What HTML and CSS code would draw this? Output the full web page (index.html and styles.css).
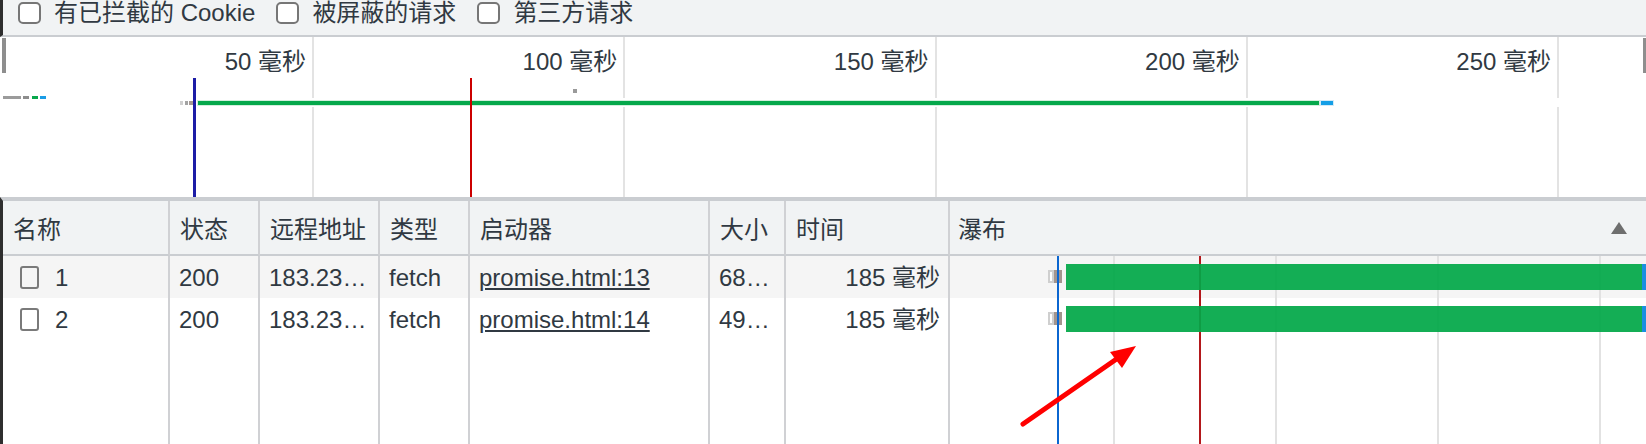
FILE: index.html
```html
<!DOCTYPE html>
<html lang="zh-CN">
<head>
<meta charset="utf-8">
<title>Network</title>
<link rel="stylesheet" href="styles.css">
</head>
<body>
<div class="app">
  <div class="toolbar">
    <label class="check"><span class="box"></span><span>有已拦截的 Cookie</span></label>
    <label class="check"><span class="box"></span><span>被屏蔽的请求</span></label>
    <label class="check"><span class="box"></span><span>第三方请求</span></label>
  </div>

  <div class="overview">
    <div class="tick">50 毫秒</div>
    <div class="tick">100 毫秒</div>
    <div class="tick">150 毫秒</div>
    <div class="tick">200 毫秒</div>
    <div class="tick">250 毫秒</div>

    <div class="ov-band"></div>
    <span class="handle handle-l"></span>
    <span class="handle handle-r"></span>
    <span class="ov-mark m1"></span>
    <span class="ov-mark m2"></span>
    <span class="ov-mark m3"></span>
    <span class="ov-mark m4"></span>
    <span class="ov-mark dot"></span>
    <span class="ov-mark p1"></span>
    <span class="ov-mark p2"></span>
    <span class="ov-mark p3"></span>
    <span class="ov-bar"></span>
    <span class="ov-recv"></span>
    <span class="ov-line ov-blue"></span>
    <span class="ov-line ov-red"></span>
  </div>

  <div class="table">
    <div class="c h">名称</div>
    <div class="c h">状态</div>
    <div class="c h">远程地址</div>
    <div class="c h">类型</div>
    <div class="c h">启动器</div>
    <div class="c h">大小</div>
    <div class="c h">时间</div>
    <div class="c h wfh last row1"><span>瀑布</span><span class="sort"></span></div>

    <div class="c r stripe name"><span class="doc"></span>1</div>
    <div class="c r stripe">200</div>
    <div class="c r stripe">183.23…</div>
    <div class="c r stripe">fetch</div>
    <div class="c r stripe"><span class="link">promise.html:13</span></div>
    <div class="c r stripe">68…</div>
    <div class="c r stripe num">185 毫秒</div>
    <div class="c r stripe last row2"></div>

    <div class="c r name"><span class="doc"></span>2</div>
    <div class="c r">200</div>
    <div class="c r">183.23…</div>
    <div class="c r">fetch</div>
    <div class="c r"><span class="link">promise.html:14</span></div>
    <div class="c r">49…</div>
    <div class="c r num">185 毫秒</div>
    <div class="c r last row3"></div>

    <div class="c f"></div>
    <div class="c f"></div>
    <div class="c f"></div>
    <div class="c f"></div>
    <div class="c f"></div>
    <div class="c f"></div>
    <div class="c f"></div>
    <div class="c f last row4"></div>

    <div class="wf">
      <span class="wf-grid g1"></span>
      <span class="wf-grid g2"></span>
      <span class="wf-grid g3"></span>
      <span class="wf-grid g4"></span>
      <span class="wf-line wf-red"></span>
      <span class="wf-queue q1"></span>
      <span class="wf-stall s1"></span>
      <span class="wf-queue q2"></span>
      <span class="wf-stall s2"></span>
      <span class="wf-line wf-blue"></span>
      <span class="wf-bar b1"></span>
      <span class="wf-recv b1"></span>
      <span class="wf-bar b2"></span>
      <span class="wf-recv b2"></span>
    </div>
  </div>

  <svg class="arrow" width="140" height="100" viewBox="0 0 140 100">
    <line x1="13" y1="89" x2="108" y2="23" stroke="#ff0000" stroke-width="5" stroke-linecap="round"/>
    <polygon points="126,11 100,17 112,33" fill="#ff0000"/>
  </svg>
</div>
</body>
</html>
```

FILE: styles.css
```css
* {
  box-sizing: border-box;
  margin: 0;
  padding: 0;
}

html,
body {
  width: 1646px;
  height: 444px;
  overflow: hidden;
  background: #ffffff;
}

body {
  font-family: "Liberation Sans", "Noto Sans CJK SC", sans-serif;
  font-size: 24px;
  color: #303942;
}

.app {
  position: relative;
  display: flex;
  flex-direction: column;
  height: 444px;
}

/* toolbar */
.toolbar {
  flex: none;
  height: 37px;
  display: flex;
  align-items: flex-start;
  gap: 21px;
  padding-left: 15px;
  background: #f1f3f4;
  border-left: 3px solid #2e2e2e;
  border-bottom: 2px solid #cacdd1;
}

.check {
  display: flex;
  align-items: center;
  gap: 13px;
  height: 25px;
  line-height: 25px;
}

.box {
  width: 23px;
  height: 22px;
  border: 2px solid #767676;
  border-radius: 5px;
  background: #ffffff;
}

/* overview */
.overview {
  position: relative;
  flex: none;
  height: 160px;
  display: flex;
  padding-left: 2.75px;
  background: #ffffff;
}

.tick {
  flex: 0 0 311.25px;
  border-right: 2px solid #e3e3e3;
  text-align: right;
  padding: 12px 6px 0 0;
  line-height: 26px;
  white-space: nowrap;
}

.ov-band {
  position: absolute;
  left: 0;
  right: 0;
  top: 61px;
  height: 9px;
  background: #ffffff;
}

.handle {
  position: absolute;
  top: 1px;
  height: 35px;
  background: #8e8e8e;
}

.handle-l {
  left: 2px;
  width: 4px;
}

.handle-r {
  right: 0;
  width: 3px;
}

.ov-mark {
  position: absolute;
  height: 3px;
  top: 59px;
}

.m1 { left: 3px; width: 18px; background: #9b9b9b; }
.m2 { left: 23px; width: 6px; background: #8d8d8d; }
.m3 { left: 32px; width: 6px; background: #08a84c; }
.m4 { left: 40px; width: 6px; background: #1a9de6; }

.dot {
  left: 573px;
  top: 52px;
  width: 4px;
  height: 4px;
  background: #9a9a9a;
}

.p1 { top: 64px; height: 4px; left: 180px; width: 3px; background: #d0d0d0; }
.p2 { top: 64px; height: 4px; left: 185px; width: 3px; background: #a3a3a3; }
.p3 { top: 64px; height: 4px; left: 189px; width: 5px; background: #a69a94; }

.ov-bar {
  position: absolute;
  left: 198px;
  width: 1121px;
  top: 64px;
  height: 4px;
  background: #05a84b;
  box-shadow: 0 0 0 1px #d3efdd;
}

.ov-recv {
  position: absolute;
  left: 1321px;
  width: 12px;
  top: 64px;
  height: 4px;
  background: #149ee6;
  box-shadow: 0 0 0 1px #d3eaf7;
}

.ov-line {
  position: absolute;
  top: 41px;
  bottom: 0;
}

.ov-blue {
  left: 193px;
  width: 3px;
  background: #1c1ca6;
}

.ov-red {
  left: 470px;
  width: 2px;
  background: #cc0000;
}

/* table */
.table {
  position: relative;
  flex: 1;
  display: grid;
  grid-template-columns: 167px 90px 120px 90px 240px 76px 164px 1fr;
  grid-template-rows: 55px 42px 42px 1fr;
  border-top: 4px solid #cacdd1;
  border-left: 3px solid #2e2e2e;
}

.c {
  display: flex;
  align-items: center;
  padding: 0 9px;
  border-right: 2px solid #d0d1d4;
  white-space: nowrap;
  overflow: hidden;
  line-height: 26px;
}

.c.last {
  grid-column: 8;
  border-right: none;
}

.row1 { grid-row: 1; }
.row2 { grid-row: 2; }
.row3 { grid-row: 3; }
.row4 { grid-row: 4; }

.h {
  background: #f1f3f4;
  border-bottom: 2px solid #cacdd1;
  padding-top: 4px;
  padding-left: 10px;
}

.r {
  padding-top: 2px;
}

.stripe {
  background: #f5f5f5;
}

.name {
  padding-left: 17px;
}

.doc {
  flex: none;
  width: 19px;
  height: 23px;
  margin-right: 16px;
  margin-top: -2px;
  border: 2px solid #7a7a7a;
  border-radius: 3px;
}

.num {
  justify-content: flex-end;
  padding-right: 8px;
}

.link {
  text-decoration: underline;
  text-decoration-thickness: 2px;
  text-underline-offset: 2px;
}

.wfh {
  justify-content: space-between;
  padding-left: 8px;
  padding-right: 19px;
}

.sort {
  width: 0;
  height: 0;
  border-left: 8px solid transparent;
  border-right: 8px solid transparent;
  border-bottom: 12px solid #6e6e6e;
  margin-top: -4px;
}

/* waterfall */
.wf {
  grid-column: 8;
  grid-row: 2 / 5;
  position: relative;
  pointer-events: none;
}

.wf-grid {
  position: absolute;
  top: 0;
  bottom: 0;
  width: 2px;
  background: #e2e2e2;
}

.g1 { left: 163px; }
.g2 { left: 325px; }
.g3 { left: 487px; }
.g4 { left: 649px; }

.wf-line {
  position: absolute;
  top: 0;
  bottom: 0;
  width: 2px;
}

.wf-blue {
  left: 107px;
  background: #0b66d0;
}

.wf-red {
  left: 249px;
  background: #b3181b;
}

.wf-queue {
  position: absolute;
  left: 98px;
  width: 6px;
  height: 13px;
  border: 2px solid #cfcfcf;
  background: #ffffff;
}

.wf-stall {
  position: absolute;
  left: 104px;
  width: 8px;
  height: 13px;
  background: #a2958f;
}

.q1, .s1 { top: 14px; }
.q2, .s2 { top: 56px; }

.wf-bar {
  position: absolute;
  left: 116px;
  width: 576px;
  height: 26px;
  background: rgba(2, 168, 72, 0.93);
}

.wf-recv {
  position: absolute;
  left: 692px;
  width: 4px;
  height: 26px;
  background: #1a8fe0;
}

.b1 { top: 8px; }
.b2 { top: 50px; }

/* annotation arrow */
.arrow {
  position: absolute;
  left: 1010px;
  top: 335px;
  pointer-events: none;
}
```
